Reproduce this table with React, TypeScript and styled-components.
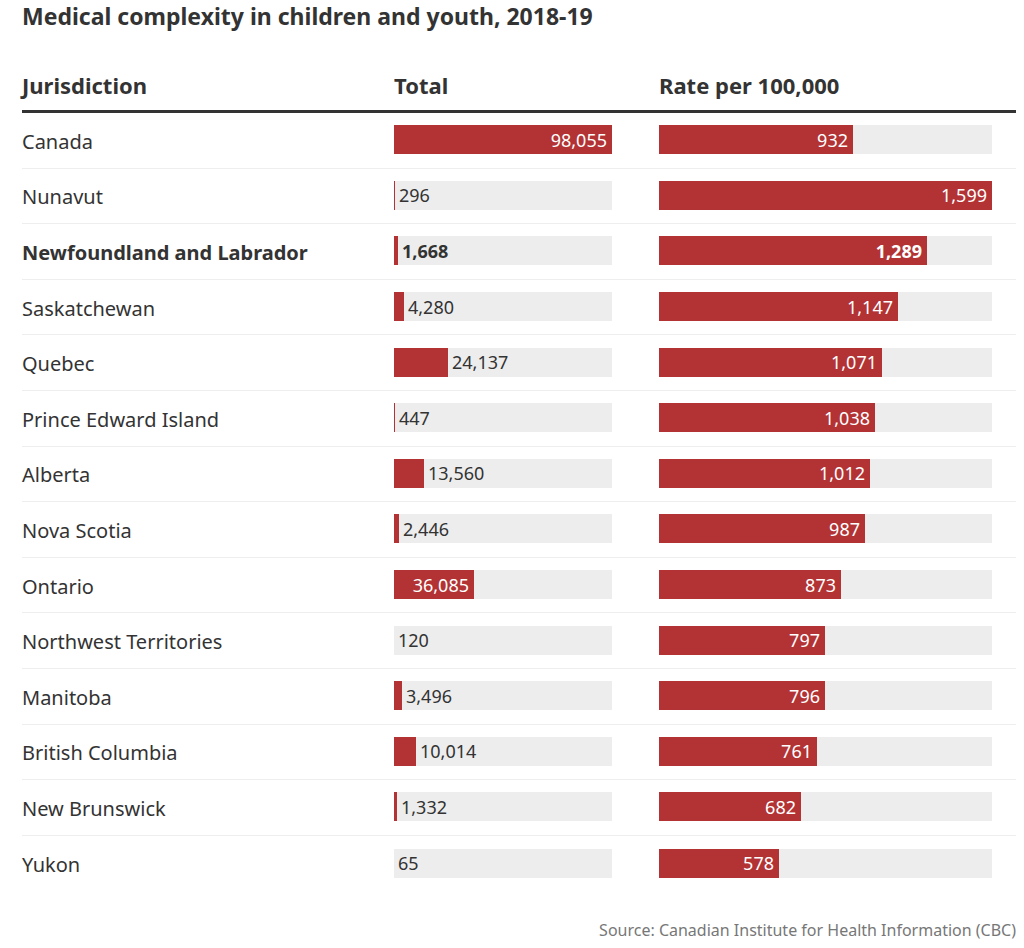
import styled, { createGlobalStyle } from "styled-components";

interface RowData {
  name: string;
  total: number;
  rate: number;
  bold?: boolean;
}

const rows: RowData[] = [
  { name: "Canada", total: 98055, rate: 932 },
  { name: "Nunavut", total: 296, rate: 1599 },
  { name: "Newfoundland and Labrador", total: 1668, rate: 1289, bold: true },
  { name: "Saskatchewan", total: 4280, rate: 1147 },
  { name: "Quebec", total: 24137, rate: 1071 },
  { name: "Prince Edward Island", total: 447, rate: 1038 },
  { name: "Alberta", total: 13560, rate: 1012 },
  { name: "Nova Scotia", total: 2446, rate: 987 },
  { name: "Ontario", total: 36085, rate: 873 },
  { name: "Northwest Territories", total: 120, rate: 797 },
  { name: "Manitoba", total: 3496, rate: 796 },
  { name: "British Columbia", total: 10014, rate: 761 },
  { name: "New Brunswick", total: 1332, rate: 682 },
  { name: "Yukon", total: 65, rate: 578 },
];

const MAX_TOTAL = 98055;
const MAX_RATE = 1599;

const GlobalStyle = createGlobalStyle`
  html, body {
    margin: 0;
    padding: 0;
    background: #fff;
  }
  body {
    font-family: "Noto Sans", "Open Sans", Arial, sans-serif;
    color: #333;
  }
`;

const Wrapper = styled.div`
  width: 994px;
  padding: 3px 8px 0 22px;
`;

const Title = styled.h1`
  margin: 0;
  font-size: 23px;
  line-height: 26px;
  font-weight: 700;
  color: #333;
`;

const Grid = styled.div`
  display: grid;
  grid-template-columns: 372px 218px 47px 333px 24px;
  align-items: center;
`;

const HeadRow = styled(Grid)`
  margin-top: 44px;
  padding-bottom: 13px;
  border-bottom: 3px solid #333;

  > span {
    font-size: 22px;
    line-height: 24px;
    font-weight: 700;
  }
`;

const Body = styled.div`
  > div:last-child {
    border-bottom: none;
  }
`;

const Row = styled(Grid)`
  box-sizing: border-box;
  height: 55.6px;
  border-bottom: 1px solid #eeeeee;
`;

const Name = styled.span<{ $bold?: boolean }>`
  font-size: 20px;
  padding-top: 2px;
  font-weight: ${(p) => (p.$bold ? 700 : 400)};
`;

const Track = styled.div`
  display: flex;
  align-items: center;
  height: 29px;
  background: #ededed;
  margin-top: -1px;
`;

const Bar = styled.div`
  height: 100%;
  background: #b33234;
  display: flex;
  align-items: center;
  justify-content: flex-end;
  flex-shrink: 0;
`;

const Value = styled.span<{ $inside: boolean; $bold?: boolean }>`
  font-size: 18px;
  font-weight: ${(p) => (p.$bold ? 700 : 400)};
  color: ${(p) => (p.$inside ? "#fff" : "#333")};
  padding: ${(p) => (p.$inside ? "0 5px 0 0" : "0 0 0 4px")};
  white-space: nowrap;
`;

const Source = styled.div`
  margin-top: 28px;
  text-align: right;
  font-size: 16px;
  line-height: 22px;
  color: #777;
`;

const fmt = (n: number) => n.toLocaleString("en-US");

const BarCell: React.FC<{
  value: number;
  max: number;
  width: number;
  bold?: boolean;
}> = ({ value, max, width, bold }) => {
  const w = Math.round((value / max) * width);
  const label = fmt(value);
  const inside = w > label.length * 10 + 12;
  return (
    <Track>
      <Bar style={{ width: `${w}px` }}>
        {inside && (
          <Value $inside $bold={bold}>
            {label}
          </Value>
        )}
      </Bar>
      {!inside && (
        <Value $inside={false} $bold={bold}>
          {label}
        </Value>
      )}
    </Track>
  );
};

const App: React.FC = () => {
  return (
    <Wrapper>
      <GlobalStyle />
      <Title>Medical complexity in children and youth, 2018-19</Title>
      <HeadRow>
        <span>Jurisdiction</span>
        <span>Total</span>
        <span />
        <span>Rate per 100,000</span>
        <span />
      </HeadRow>
      <Body>
        {rows.map((r) => (
          <Row key={r.name}>
            <Name $bold={r.bold}>{r.name}</Name>
            <BarCell value={r.total} max={MAX_TOTAL} width={218} bold={r.bold} />
            <span />
            <BarCell value={r.rate} max={MAX_RATE} width={333} bold={r.bold} />
            <span />
          </Row>
        ))}
      </Body>
      <Source>Source: Canadian Institute for Health Information (CBC)</Source>
    </Wrapper>
  );
};

export default App;
